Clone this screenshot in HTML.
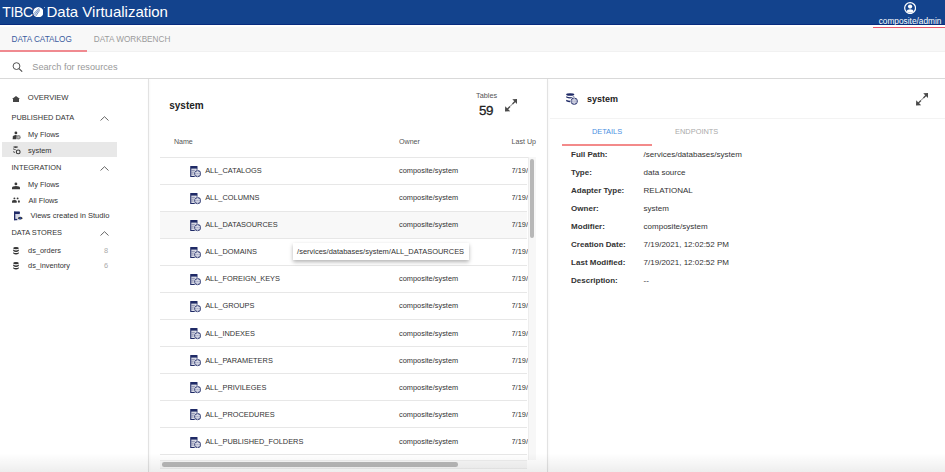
<!DOCTYPE html>
<html><head><meta charset="utf-8">
<style>
*{margin:0;padding:0;box-sizing:border-box}
html,body{width:945px;height:472px;overflow:hidden;background:#fff;font-family:"Liberation Sans",sans-serif;color:#333}
.a{position:absolute;white-space:nowrap;line-height:1}
#hdr{position:absolute;left:0;top:0;width:945px;height:25px;background:#13438d;border-bottom:1.2px solid #082c7e}
#tabs{position:absolute;left:0;top:27px;width:945px;height:25px;background:#f8f8f8;box-shadow:inset 0 -1px 1px rgba(0,0,0,0.03)}
#search{position:absolute;left:0;top:52px;width:945px;height:27px;background:#fff;border-bottom:1px solid #d9d9d9}
.side{font-size:7.4px;color:#333}
.sec{font-size:7.4px;color:#333}
.row-b{position:absolute;left:160px;width:367px;height:1px;background:#e7e7e7}
.rt{font-size:7.4px;color:#333}
.lbl{font-size:8px;font-weight:bold;color:#333}
.val{font-size:8px;color:#333}
</style></head><body>
<div id="hdr"></div>
<div id="tabs"></div>
<div id="search"></div>

<!-- header content -->
<div class="a" style="left:2.2px;top:5.0px;font-size:14px;color:#fff;letter-spacing:-0.35px">TIBC</div>
<svg style="position:absolute;left:32.8px;top:6.9px" width="10.5" height="10.5" viewBox="0 0 10.5 10.5">
  <circle cx="5.25" cy="5.25" r="5.2" fill="#fff"/>
  <path d="M0.9 6.6 L6.0 1.2 M1.6 8.0 L6.4 2.2 M2.7 9.2 L6.6 3.4" stroke="#2a57a0" stroke-width="0.7" fill="none"/>
  <path d="M6.0 1.2 L3.6 4.8 M6.4 2.2 L4.4 5.6" stroke="#b8c6e0" stroke-width="0.6" fill="none"/>
</svg>
<div style="position:absolute;left:43.6px;top:6.5px;width:1.6px;height:1.6px;border-radius:50%;background:#c5d0e6"></div>
<div class="a" style="left:46.5px;top:4.0px;font-size:15px;color:#fff;letter-spacing:0">Data Virtualization</div>

<svg style="position:absolute;left:904px;top:2px" width="12.2" height="12.2" viewBox="0 0 12 12">
  <circle cx="6" cy="6" r="5.35" fill="none" stroke="#fff" stroke-width="1.2"/>
  <circle cx="6" cy="4.5" r="2.1" fill="#fff"/>
  <path d="M2.4 9.1 Q3 7.2 6 7.2 Q9 7.2 9.6 9.1 Q8.2 10.7 6 10.7 Q3.8 10.7 2.4 9.1Z" fill="#fff"/>
</svg>
<div class="a" style="left:878.7px;top:16.7px;font-size:8.3px;color:#fff">composite/admin</div>
<div style="position:absolute;left:873px;top:27px;width:72px;height:1.3px;background:#e8566a"></div>

<!-- tabs -->
<div class="a" style="left:11.5px;top:35.7px;font-size:8.2px;color:#3b5c9e">DATA CATALOG</div>
<div class="a" style="left:93.75px;top:35.7px;font-size:8.2px;color:#9b9b9b">DATA WORKBENCH</div>
<div style="position:absolute;left:0;top:50.3px;width:86.5px;height:1.3px;background:#f08a90"></div>

<!-- search -->
<svg style="position:absolute;left:12px;top:61.8px" width="11" height="10" viewBox="0 0 11 10">
  <circle cx="4.5" cy="4.1" r="3.4" fill="none" stroke="#4a4a4a" stroke-width="0.95"/>
  <path d="M7 6.6 L10.2 9.6" stroke="#4a4a4a" stroke-width="1.15"/>
</svg>
<div class="a" style="left:32.25px;top:62.6px;font-size:9.2px;color:#999;transform:scaleY(1.06);transform-origin:0 0">Search for resources</div>

<!-- left sidebar -->
<svg style="position:absolute;left:12px;top:96px" width="8" height="6" viewBox="0 0 8 6">
  <path d="M0 3 L4 0 L8 3 L7 3 L7 6 L1 6 L1 3Z" fill="#444"/>
</svg>
<div class="a side" style="left:27.75px;top:94px;font-size:7.6px">OVERVIEW</div>
<div class="a sec" style="left:11.5px;top:113.7px">PUBLISHED DATA</div>
<svg class="chev" style="position:absolute;left:100px;top:116px" width="9" height="5" viewBox="0 0 9 5"><path d="M0.5 4.5 L4.5 0.7 L8.5 4.5" stroke="#555" stroke-width="0.9" fill="none"/></svg>
<svg style="position:absolute;left:11.5px;top:130.5px" width="9" height="9" viewBox="0 0 9 9">
  <circle cx="3.9" cy="1.9" r="1.4" fill="#3a3a3a"/>
  <path d="M0.6 8.2 L0.9 5.6 Q1.3 4 3.6 4 Q4.6 4 5 4.4 L4.4 8.2Z" fill="#3a3a3a"/>
  <circle cx="6.4" cy="6.3" r="2.3" fill="#8a8a8a"/>
  <circle cx="6.4" cy="6.3" r="1" fill="#bbb"/>
</svg>
<div class="a side" style="left:28.1px;top:130.6px">My Flows</div>
<div style="position:absolute;left:2.2px;top:142.4px;width:114.8px;height:15px;background:#e8e8e8"></div>
<svg style="position:absolute;left:11.5px;top:146px" width="9" height="9" viewBox="0 0 9 9">
  <ellipse cx="3.6" cy="1.1" rx="2.5" ry="0.8" fill="#3a3a3a"/>
  <path d="M1.1 2.8 Q2.2 3.6 3.6 3.6" stroke="#3a3a3a" stroke-width="0.9" fill="none"/>
  <path d="M1.1 5.6 Q2 6.3 3 6.4" stroke="#3a3a3a" stroke-width="0.9" fill="none"/>
  <circle cx="6.2" cy="5.9" r="1.9" fill="none" stroke="#3a3a3a" stroke-width="1.1"/>
</svg>
<div class="a side" style="left:28.1px;top:146.7px">system</div>
<div class="a sec" style="left:11.5px;top:164px">INTEGRATION</div>
<svg style="position:absolute;left:100px;top:166px" width="9" height="5" viewBox="0 0 9 5"><path d="M0.5 4.5 L4.5 0.7 L8.5 4.5" stroke="#555" stroke-width="0.9" fill="none"/></svg>
<svg style="position:absolute;left:12px;top:181.5px" width="8" height="8" viewBox="0 0 8 8">
  <circle cx="3.9" cy="1.9" r="1.4" fill="#3a3a3a"/>
  <path d="M0 7.2 L0 5.8 Q0 4.1 4 4.1 Q8 4.1 8 5.8 L8 7.2Z" fill="#3a3a3a"/>
</svg>
<div class="a side" style="left:28.1px;top:181.1px">My Flows</div>
<svg style="position:absolute;left:12px;top:197px" width="8" height="6" viewBox="0 0 8 6">
  <circle cx="2.4" cy="1.4" r="0.95" fill="#3a3a3a"/>
  <circle cx="5.6" cy="1.4" r="0.95" fill="#3a3a3a"/>
  <path d="M0 5.7 L0 4.2 Q0 3 2.4 3 Q4.7 3 4.7 4.2 L4.7 5.7Z" fill="#3a3a3a"/>
  <ellipse cx="6.9" cy="4.5" rx="0.95" ry="1.3" fill="#3a3a3a"/>
</svg>
<div class="a side" style="left:28.5px;top:196.5px">All Flows</div>
<svg style="position:absolute;left:13px;top:210.5px" width="11" height="10" viewBox="0 0 11 10">
  <rect x="1" y="0.6" width="5.9" height="8.6" rx="0.6" fill="#d3d6e4"/>
  <rect x="1" y="0.6" width="5.9" height="2.3" rx="0.6" fill="#1f2a66"/>
  <rect x="1" y="0.6" width="1.3" height="8.6" fill="#1f2a66"/>
  <rect x="1" y="7.9" width="3.2" height="1.3" fill="#1f2a66"/>
  <path d="M4.2 7.2 Q7.2 3.4 10.2 7.2 Q7.2 10.4 4.2 7.2Z" fill="#fff"/>
  <path d="M4.6 7.2 Q7.2 4.4 9.8 7.2 Q7.2 9.6 4.6 7.2Z" fill="#333"/>
  <circle cx="7.2" cy="7.2" r="1.05" fill="#2346a8"/>
</svg>
<div class="a side" style="left:30.6px;top:211.5px;font-size:7.55px">Views created in Studio</div>
<div class="a sec" style="left:11.5px;top:229px">DATA STORES</div>
<svg style="position:absolute;left:100px;top:231px" width="9" height="5" viewBox="0 0 9 5"><path d="M0.5 4.5 L4.5 0.7 L8.5 4.5" stroke="#555" stroke-width="0.9" fill="none"/></svg>
<svg style="position:absolute;left:13px;top:246.6px" width="6" height="8" viewBox="0 0 6 8">
  <ellipse cx="3" cy="1.2" rx="2.8" ry="1.1" fill="#333"/>
  <path d="M0.2 2.6 Q3 4.4 5.8 2.6 L5.8 4 Q3 5.8 0.2 4Z M0.2 5.2 Q3 7 5.8 5.2 L5.8 6.6 Q3 8.4 0.2 6.6Z" fill="#333"/>
</svg>
<div class="a side" style="left:28.1px;top:246.5px">ds_orders</div>
<div class="a side" style="left:104px;top:246.5px;color:#aaa">8</div>
<svg style="position:absolute;left:13px;top:262px" width="6" height="8" viewBox="0 0 6 8">
  <ellipse cx="3" cy="1.2" rx="2.8" ry="1.1" fill="#333"/>
  <path d="M0.2 2.6 Q3 4.4 5.8 2.6 L5.8 4 Q3 5.8 0.2 4Z M0.2 5.2 Q3 7 5.8 5.2 L5.8 6.6 Q3 8.4 0.2 6.6Z" fill="#333"/>
</svg>
<div class="a side" style="left:28.1px;top:261.5px">ds_inventory</div>
<div class="a side" style="left:104px;top:261.5px;color:#aaa">6</div>

<!-- middle card -->
<div style="position:absolute;left:148px;top:79px;width:1px;height:393px;background:#e2e2e2;box-shadow:0.5px 0 2px rgba(0,0,0,0.06)"></div>
<div style="position:absolute;left:547px;top:79px;width:1px;height:393px;background:#e2e2e2;box-shadow:0.5px 0 2px rgba(0,0,0,0.06)"></div>
<div class="a" style="left:169.25px;top:100.5px;font-size:10px;font-weight:bold;color:#222">system</div>
<div class="a" style="left:476px;top:91.9px;font-size:7.3px;color:#555">Tables</div>
<div class="a" style="left:478.9px;top:103.9px;font-size:13.4px;color:#222;letter-spacing:-0.3px;-webkit-text-stroke:0.3px #222">59</div>
<svg style="position:absolute;left:504.5px;top:99px" width="12.5" height="12.5" viewBox="0 0 12 12">
  <path d="M12 0 L7 0.2 L11.8 5Z M0 12 L0.2 7 L5 11.8Z" fill="#4a4a4a"/><path d="M9.8 2.2 L7.2 4.8 M4.8 7.2 L2.2 9.8" stroke="#4a4a4a" stroke-width="1.3"/><path d="M7.2 4.8 L4.8 7.2" stroke="#777" stroke-width="0.9"/>
</svg>
<div class="a" style="left:173.9px;top:138.6px;font-size:7.1px;color:#555">Name</div>
<div class="a" style="left:399px;top:138.6px;font-size:7.1px;color:#555">Owner</div>
<div class="a" style="left:511.5px;top:138.6px;font-size:7.1px;color:#555">Last Up</div>

<div id="rows">
<div class="row-b" style="top:156.60px;width:376px"></div>
<svg style="position:absolute;left:189.6px;top:166.00px" width="11.5" height="11.5" viewBox="0 0 11.5 11.5">
  <rect x="0.2" y="0" width="7.3" height="11" rx="0.5" fill="#1f2a66"/>
  <rect x="1.3" y="2.6" width="5.4" height="7.4" fill="#dcdee8"/>
  <path d="M1.3 4.4 L5 4.4 M1.3 6.2 L4 6.2 M1.3 8 L4 8" stroke="#6a7096" stroke-width="0.7"/>
  <circle cx="7.6" cy="7.6" r="3.9" fill="#fff"/>
  <circle cx="7.6" cy="7.6" r="3.1" fill="#a4a8c4" stroke="#1f2a66" stroke-width="0.9"/>
  <path d="M4.8 6.5 L10.4 6.5 M4.8 8.7 L10.4 8.7" stroke="#eef0f6" stroke-width="0.55"/>
  <path d="M7.6 4.6 Q5.8 7.6 7.6 10.6 M7.6 4.6 Q9.4 7.6 7.6 10.6" stroke="#eef0f6" stroke-width="0.4" fill="none"/>
</svg>
<div class="a rt" style="left:205.2px;top:167.24px">ALL_CATALOGS</div>
<div class="a rt" style="left:399px;top:167.24px">composite/system</div>
<div class="a rt" style="left:511.5px;top:167.24px;width:16px;overflow:hidden">7/19/2021</div>
<div class="row-b" style="top:183.65px"></div>
<svg style="position:absolute;left:189.6px;top:193.05px" width="11.5" height="11.5" viewBox="0 0 11.5 11.5">
  <rect x="0.2" y="0" width="7.3" height="11" rx="0.5" fill="#1f2a66"/>
  <rect x="1.3" y="2.6" width="5.4" height="7.4" fill="#dcdee8"/>
  <path d="M1.3 4.4 L5 4.4 M1.3 6.2 L4 6.2 M1.3 8 L4 8" stroke="#6a7096" stroke-width="0.7"/>
  <circle cx="7.6" cy="7.6" r="3.9" fill="#fff"/>
  <circle cx="7.6" cy="7.6" r="3.1" fill="#a4a8c4" stroke="#1f2a66" stroke-width="0.9"/>
  <path d="M4.8 6.5 L10.4 6.5 M4.8 8.7 L10.4 8.7" stroke="#eef0f6" stroke-width="0.55"/>
  <path d="M7.6 4.6 Q5.8 7.6 7.6 10.6 M7.6 4.6 Q9.4 7.6 7.6 10.6" stroke="#eef0f6" stroke-width="0.4" fill="none"/>
</svg>
<div class="a rt" style="left:205.2px;top:194.29px">ALL_COLUMNS</div>
<div class="a rt" style="left:399px;top:194.29px">composite/system</div>
<div class="a rt" style="left:511.5px;top:194.29px;width:16px;overflow:hidden">7/19/2021</div>
<div class="row-b" style="top:210.70px"></div>
<div style="position:absolute;left:160px;top:211.70px;width:367px;height:26.05px;background:#f8f8f8"></div>
<svg style="position:absolute;left:189.6px;top:220.10px" width="11.5" height="11.5" viewBox="0 0 11.5 11.5">
  <rect x="0.2" y="0" width="7.3" height="11" rx="0.5" fill="#1f2a66"/>
  <rect x="1.3" y="2.6" width="5.4" height="7.4" fill="#dcdee8"/>
  <path d="M1.3 4.4 L5 4.4 M1.3 6.2 L4 6.2 M1.3 8 L4 8" stroke="#6a7096" stroke-width="0.7"/>
  <circle cx="7.6" cy="7.6" r="3.9" fill="#fff"/>
  <circle cx="7.6" cy="7.6" r="3.1" fill="#a4a8c4" stroke="#1f2a66" stroke-width="0.9"/>
  <path d="M4.8 6.5 L10.4 6.5 M4.8 8.7 L10.4 8.7" stroke="#eef0f6" stroke-width="0.55"/>
  <path d="M7.6 4.6 Q5.8 7.6 7.6 10.6 M7.6 4.6 Q9.4 7.6 7.6 10.6" stroke="#eef0f6" stroke-width="0.4" fill="none"/>
</svg>
<div class="a rt" style="left:205.2px;top:221.34px">ALL_DATASOURCES</div>
<div class="a rt" style="left:399px;top:221.34px">composite/system</div>
<div class="a rt" style="left:511.5px;top:221.34px;width:16px;overflow:hidden">7/19/2021</div>
<div class="row-b" style="top:237.75px"></div>
<svg style="position:absolute;left:189.6px;top:247.15px" width="11.5" height="11.5" viewBox="0 0 11.5 11.5">
  <rect x="0.2" y="0" width="7.3" height="11" rx="0.5" fill="#1f2a66"/>
  <rect x="1.3" y="2.6" width="5.4" height="7.4" fill="#dcdee8"/>
  <path d="M1.3 4.4 L5 4.4 M1.3 6.2 L4 6.2 M1.3 8 L4 8" stroke="#6a7096" stroke-width="0.7"/>
  <circle cx="7.6" cy="7.6" r="3.9" fill="#fff"/>
  <circle cx="7.6" cy="7.6" r="3.1" fill="#a4a8c4" stroke="#1f2a66" stroke-width="0.9"/>
  <path d="M4.8 6.5 L10.4 6.5 M4.8 8.7 L10.4 8.7" stroke="#eef0f6" stroke-width="0.55"/>
  <path d="M7.6 4.6 Q5.8 7.6 7.6 10.6 M7.6 4.6 Q9.4 7.6 7.6 10.6" stroke="#eef0f6" stroke-width="0.4" fill="none"/>
</svg>
<div class="a rt" style="left:205.2px;top:248.39px">ALL_DOMAINS</div>
<div class="a rt" style="left:399px;top:248.39px">composite/system</div>
<div class="a rt" style="left:511.5px;top:248.39px;width:16px;overflow:hidden">7/19/2021</div>
<div class="row-b" style="top:264.80px"></div>
<svg style="position:absolute;left:189.6px;top:274.20px" width="11.5" height="11.5" viewBox="0 0 11.5 11.5">
  <rect x="0.2" y="0" width="7.3" height="11" rx="0.5" fill="#1f2a66"/>
  <rect x="1.3" y="2.6" width="5.4" height="7.4" fill="#dcdee8"/>
  <path d="M1.3 4.4 L5 4.4 M1.3 6.2 L4 6.2 M1.3 8 L4 8" stroke="#6a7096" stroke-width="0.7"/>
  <circle cx="7.6" cy="7.6" r="3.9" fill="#fff"/>
  <circle cx="7.6" cy="7.6" r="3.1" fill="#a4a8c4" stroke="#1f2a66" stroke-width="0.9"/>
  <path d="M4.8 6.5 L10.4 6.5 M4.8 8.7 L10.4 8.7" stroke="#eef0f6" stroke-width="0.55"/>
  <path d="M7.6 4.6 Q5.8 7.6 7.6 10.6 M7.6 4.6 Q9.4 7.6 7.6 10.6" stroke="#eef0f6" stroke-width="0.4" fill="none"/>
</svg>
<div class="a rt" style="left:205.2px;top:275.44px">ALL_FOREIGN_KEYS</div>
<div class="a rt" style="left:399px;top:275.44px">composite/system</div>
<div class="a rt" style="left:511.5px;top:275.44px;width:16px;overflow:hidden">7/19/2021</div>
<div class="row-b" style="top:291.85px"></div>
<svg style="position:absolute;left:189.6px;top:301.25px" width="11.5" height="11.5" viewBox="0 0 11.5 11.5">
  <rect x="0.2" y="0" width="7.3" height="11" rx="0.5" fill="#1f2a66"/>
  <rect x="1.3" y="2.6" width="5.4" height="7.4" fill="#dcdee8"/>
  <path d="M1.3 4.4 L5 4.4 M1.3 6.2 L4 6.2 M1.3 8 L4 8" stroke="#6a7096" stroke-width="0.7"/>
  <circle cx="7.6" cy="7.6" r="3.9" fill="#fff"/>
  <circle cx="7.6" cy="7.6" r="3.1" fill="#a4a8c4" stroke="#1f2a66" stroke-width="0.9"/>
  <path d="M4.8 6.5 L10.4 6.5 M4.8 8.7 L10.4 8.7" stroke="#eef0f6" stroke-width="0.55"/>
  <path d="M7.6 4.6 Q5.8 7.6 7.6 10.6 M7.6 4.6 Q9.4 7.6 7.6 10.6" stroke="#eef0f6" stroke-width="0.4" fill="none"/>
</svg>
<div class="a rt" style="left:205.2px;top:302.49px">ALL_GROUPS</div>
<div class="a rt" style="left:399px;top:302.49px">composite/system</div>
<div class="a rt" style="left:511.5px;top:302.49px;width:16px;overflow:hidden">7/19/2021</div>
<div class="row-b" style="top:318.90px"></div>
<svg style="position:absolute;left:189.6px;top:328.30px" width="11.5" height="11.5" viewBox="0 0 11.5 11.5">
  <rect x="0.2" y="0" width="7.3" height="11" rx="0.5" fill="#1f2a66"/>
  <rect x="1.3" y="2.6" width="5.4" height="7.4" fill="#dcdee8"/>
  <path d="M1.3 4.4 L5 4.4 M1.3 6.2 L4 6.2 M1.3 8 L4 8" stroke="#6a7096" stroke-width="0.7"/>
  <circle cx="7.6" cy="7.6" r="3.9" fill="#fff"/>
  <circle cx="7.6" cy="7.6" r="3.1" fill="#a4a8c4" stroke="#1f2a66" stroke-width="0.9"/>
  <path d="M4.8 6.5 L10.4 6.5 M4.8 8.7 L10.4 8.7" stroke="#eef0f6" stroke-width="0.55"/>
  <path d="M7.6 4.6 Q5.8 7.6 7.6 10.6 M7.6 4.6 Q9.4 7.6 7.6 10.6" stroke="#eef0f6" stroke-width="0.4" fill="none"/>
</svg>
<div class="a rt" style="left:205.2px;top:329.54px">ALL_INDEXES</div>
<div class="a rt" style="left:399px;top:329.54px">composite/system</div>
<div class="a rt" style="left:511.5px;top:329.54px;width:16px;overflow:hidden">7/19/2021</div>
<div class="row-b" style="top:345.95px"></div>
<svg style="position:absolute;left:189.6px;top:355.35px" width="11.5" height="11.5" viewBox="0 0 11.5 11.5">
  <rect x="0.2" y="0" width="7.3" height="11" rx="0.5" fill="#1f2a66"/>
  <rect x="1.3" y="2.6" width="5.4" height="7.4" fill="#dcdee8"/>
  <path d="M1.3 4.4 L5 4.4 M1.3 6.2 L4 6.2 M1.3 8 L4 8" stroke="#6a7096" stroke-width="0.7"/>
  <circle cx="7.6" cy="7.6" r="3.9" fill="#fff"/>
  <circle cx="7.6" cy="7.6" r="3.1" fill="#a4a8c4" stroke="#1f2a66" stroke-width="0.9"/>
  <path d="M4.8 6.5 L10.4 6.5 M4.8 8.7 L10.4 8.7" stroke="#eef0f6" stroke-width="0.55"/>
  <path d="M7.6 4.6 Q5.8 7.6 7.6 10.6 M7.6 4.6 Q9.4 7.6 7.6 10.6" stroke="#eef0f6" stroke-width="0.4" fill="none"/>
</svg>
<div class="a rt" style="left:205.2px;top:356.59px">ALL_PARAMETERS</div>
<div class="a rt" style="left:399px;top:356.59px">composite/system</div>
<div class="a rt" style="left:511.5px;top:356.59px;width:16px;overflow:hidden">7/19/2021</div>
<div class="row-b" style="top:373.00px"></div>
<svg style="position:absolute;left:189.6px;top:382.40px" width="11.5" height="11.5" viewBox="0 0 11.5 11.5">
  <rect x="0.2" y="0" width="7.3" height="11" rx="0.5" fill="#1f2a66"/>
  <rect x="1.3" y="2.6" width="5.4" height="7.4" fill="#dcdee8"/>
  <path d="M1.3 4.4 L5 4.4 M1.3 6.2 L4 6.2 M1.3 8 L4 8" stroke="#6a7096" stroke-width="0.7"/>
  <circle cx="7.6" cy="7.6" r="3.9" fill="#fff"/>
  <circle cx="7.6" cy="7.6" r="3.1" fill="#a4a8c4" stroke="#1f2a66" stroke-width="0.9"/>
  <path d="M4.8 6.5 L10.4 6.5 M4.8 8.7 L10.4 8.7" stroke="#eef0f6" stroke-width="0.55"/>
  <path d="M7.6 4.6 Q5.8 7.6 7.6 10.6 M7.6 4.6 Q9.4 7.6 7.6 10.6" stroke="#eef0f6" stroke-width="0.4" fill="none"/>
</svg>
<div class="a rt" style="left:205.2px;top:383.64px">ALL_PRIVILEGES</div>
<div class="a rt" style="left:399px;top:383.64px">composite/system</div>
<div class="a rt" style="left:511.5px;top:383.64px;width:16px;overflow:hidden">7/19/2021</div>
<div class="row-b" style="top:400.05px"></div>
<svg style="position:absolute;left:189.6px;top:409.45px" width="11.5" height="11.5" viewBox="0 0 11.5 11.5">
  <rect x="0.2" y="0" width="7.3" height="11" rx="0.5" fill="#1f2a66"/>
  <rect x="1.3" y="2.6" width="5.4" height="7.4" fill="#dcdee8"/>
  <path d="M1.3 4.4 L5 4.4 M1.3 6.2 L4 6.2 M1.3 8 L4 8" stroke="#6a7096" stroke-width="0.7"/>
  <circle cx="7.6" cy="7.6" r="3.9" fill="#fff"/>
  <circle cx="7.6" cy="7.6" r="3.1" fill="#a4a8c4" stroke="#1f2a66" stroke-width="0.9"/>
  <path d="M4.8 6.5 L10.4 6.5 M4.8 8.7 L10.4 8.7" stroke="#eef0f6" stroke-width="0.55"/>
  <path d="M7.6 4.6 Q5.8 7.6 7.6 10.6 M7.6 4.6 Q9.4 7.6 7.6 10.6" stroke="#eef0f6" stroke-width="0.4" fill="none"/>
</svg>
<div class="a rt" style="left:205.2px;top:410.69px">ALL_PROCEDURES</div>
<div class="a rt" style="left:399px;top:410.69px">composite/system</div>
<div class="a rt" style="left:511.5px;top:410.69px;width:16px;overflow:hidden">7/19/2021</div>
<div class="row-b" style="top:427.10px"></div>
<svg style="position:absolute;left:189.6px;top:436.50px" width="11.5" height="11.5" viewBox="0 0 11.5 11.5">
  <rect x="0.2" y="0" width="7.3" height="11" rx="0.5" fill="#1f2a66"/>
  <rect x="1.3" y="2.6" width="5.4" height="7.4" fill="#dcdee8"/>
  <path d="M1.3 4.4 L5 4.4 M1.3 6.2 L4 6.2 M1.3 8 L4 8" stroke="#6a7096" stroke-width="0.7"/>
  <circle cx="7.6" cy="7.6" r="3.9" fill="#fff"/>
  <circle cx="7.6" cy="7.6" r="3.1" fill="#a4a8c4" stroke="#1f2a66" stroke-width="0.9"/>
  <path d="M4.8 6.5 L10.4 6.5 M4.8 8.7 L10.4 8.7" stroke="#eef0f6" stroke-width="0.55"/>
  <path d="M7.6 4.6 Q5.8 7.6 7.6 10.6 M7.6 4.6 Q9.4 7.6 7.6 10.6" stroke="#eef0f6" stroke-width="0.4" fill="none"/>
</svg>
<div class="a rt" style="left:205.2px;top:437.74px">ALL_PUBLISHED_FOLDERS</div>
<div class="a rt" style="left:399px;top:437.74px">composite/system</div>
<div class="a rt" style="left:511.5px;top:437.74px;width:16px;overflow:hidden">7/19/2021</div>
<div class="row-b" style="top:454.15px"></div>
<div style="position:absolute;left:292.6px;top:242.6px;width:176.4px;height:17px;background:#fff;box-shadow:0 2px 4px rgba(0,0,0,0.3)"></div>
<div class="a" style="left:297.1px;top:247.8px;font-size:7.47px;color:#333">/services/databases/system/ALL_DATASOURCES</div>
</div>

<!-- scrollbars -->
<div style="position:absolute;left:527.5px;top:157px;width:8px;height:303px;background:#f7f7f7;border-left:1px solid #ededed"></div>
<div style="position:absolute;left:530.2px;top:159.4px;width:3.6px;height:78.6px;border-radius:2px;background:#b8b8b8"></div>
<div style="position:absolute;left:160px;top:460px;width:367px;height:8.5px;background:#f7f7f7;border-top:1px solid #ededed;border-bottom:1px solid #ededed"></div>
<div style="position:absolute;left:162px;top:462.4px;width:296px;height:4.4px;border-radius:2.2px;background:#b8b8b8"></div>

<!-- right panel -->
<svg style="position:absolute;left:565.5px;top:92.5px" width="12" height="12" viewBox="0 0 12 12">
  <ellipse cx="4.2" cy="1.5" rx="4.1" ry="1.25" fill="#1f2a66"/>
  <path d="M0.2 3.3 Q4.2 5.1 8.2 3.3 L8.2 4.6 Q4.2 6.4 0.2 4.6Z" fill="#1f2a66"/>
  <path d="M0.2 6.8 Q3 8.1 5.6 7.6 L5.6 9.0 Q3 9.6 0.2 8.2Z" fill="#1f2a66"/>
  <circle cx="8.2" cy="8.2" r="4.1" fill="#fff"/>
  <circle cx="8.2" cy="8.2" r="3.2" fill="#a4a8c4" stroke="#1f2a66" stroke-width="0.9"/>
  <path d="M5.2 7.2 L11.2 7.2 M5.2 9.2 L11.2 9.2" stroke="#eef0f6" stroke-width="0.5"/>
  <path d="M8.2 5.1 Q6.4 8.2 8.2 11.3 M8.2 5.1 Q10 8.2 8.2 11.3" stroke="#eef0f6" stroke-width="0.4" fill="none"/>
</svg>
<div class="a" style="left:586.9px;top:94.9px;font-size:9px;font-weight:bold;color:#222">system</div>
<svg style="position:absolute;left:915.8px;top:93.2px" width="12.4" height="12.4" viewBox="0 0 12 12">
  <path d="M12 0 L7 0.2 L11.8 5Z M0 12 L0.2 7 L5 11.8Z" fill="#4a4a4a"/><path d="M9.8 2.2 L7.2 4.8 M4.8 7.2 L2.2 9.8" stroke="#4a4a4a" stroke-width="1.3"/><path d="M7.2 4.8 L4.8 7.2" stroke="#777" stroke-width="0.9"/>
</svg>
<div style="position:absolute;left:550px;top:118px;width:395px;height:1px;background:#f3f3f3"></div>
<div class="a" style="left:591.9px;top:128.3px;font-size:7.4px;color:#4a90e2">DETAILS</div>
<div class="a" style="left:675.1px;top:128.3px;font-size:7.4px;color:#aaa">ENDPOINTS</div>
<div style="position:absolute;left:562px;top:144px;width:90px;height:2px;background:#f38a8a"></div>

<div class="a lbl" style="left:571.1px;top:150.9px">Full Path:</div>
<div class="a val" style="left:643.6px;top:150.9px">/services/databases/system</div>
<div class="a lbl" style="left:571.1px;top:168.9px">Type:</div>
<div class="a val" style="left:643.6px;top:168.9px">data source</div>
<div class="a lbl" style="left:571.1px;top:186.8px">Adapter Type:</div>
<div class="a val" style="left:643.6px;top:186.8px">RELATIONAL</div>
<div class="a lbl" style="left:571.1px;top:204.8px">Owner:</div>
<div class="a val" style="left:643.6px;top:204.8px">system</div>
<div class="a lbl" style="left:571.1px;top:222.7px">Modifier:</div>
<div class="a val" style="left:643.6px;top:222.7px">composite/system</div>
<div class="a lbl" style="left:571.1px;top:240.7px">Creation Date:</div>
<div class="a val" style="left:643.6px;top:240.7px">7/19/2021, 12:02:52 PM</div>
<div class="a lbl" style="left:571.1px;top:258.6px">Last Modified:</div>
<div class="a val" style="left:643.6px;top:258.6px">7/19/2021, 12:02:52 PM</div>
<div class="a lbl" style="left:571.1px;top:276.6px">Description:</div>
<div class="a val" style="left:643.6px;top:276.6px">--</div>

<!-- bottom fade -->
<div style="position:absolute;left:0;top:453px;width:945px;height:19px;background:linear-gradient(rgba(0,0,0,0),rgba(0,0,0,0.065))"></div>
</body></html>
